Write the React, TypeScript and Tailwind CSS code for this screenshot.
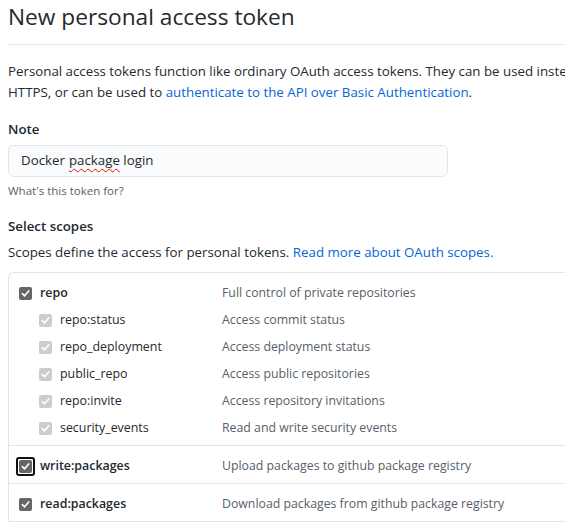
import React from 'react';

type Scope = {
  name: string;
  description: string;
  children?: { name: string; description: string }[];
  focused?: boolean;
};

const scopes: Scope[] = [
  {
    name: 'repo',
    description: 'Full control of private repositories',
    children: [
      { name: 'repo:status', description: 'Access commit status' },
      { name: 'repo_deployment', description: 'Access deployment status' },
      { name: 'public_repo', description: 'Access public repositories' },
      { name: 'repo:invite', description: 'Access repository invitations' },
      { name: 'security_events', description: 'Read and write security events' },
    ],
  },
  { name: 'write:packages', description: 'Upload packages to github package registry', focused: true },
  { name: 'read:packages', description: 'Download packages from github package registry' },
];

function CheckBox({ disabled, focused }: { disabled?: boolean; focused?: boolean }) {
  const box = (
    <span
      className={`flex h-[13px] w-[13px] items-center justify-center rounded-[2px] ${
        disabled ? 'bg-[#cdcdcd]' : 'bg-[#666666]'
      }`}
    >
      <svg width="9" height="9" viewBox="0 0 10 10" fill="none">
        <path d="M1.5 5.2 L4 7.6 L8.6 2.2" stroke="white" strokeWidth="1.8" strokeLinecap="round" strokeLinejoin="round" />
      </svg>
    </span>
  );
  if (focused) {
    return (
      <span className="-m-[3px] flex rounded-[3px] border-2 border-[#101010] p-[1px]">{box}</span>
    );
  }
  return box;
}

function ScopeRow({
  name,
  description,
  sub,
  focused,
}: {
  name: string;
  description: string;
  sub?: boolean;
  focused?: boolean;
}) {
  return (
    <div className="flex h-[27px] items-center">
      <div className={`flex w-[203px] shrink-0 items-center gap-2 ${sub ? 'pl-5' : ''}`}>
        <CheckBox disabled={sub} focused={focused} />
        <span className={`text-[12.4px] text-[#24292e] ${sub ? '' : 'font-semibold'}`}>{name}</span>
      </div>
      <span className="whitespace-nowrap text-[12.3px] text-[#586069]">{description}</span>
    </div>
  );
}

export default function App() {
  return (
    <div className="h-[524px] w-[565px] overflow-hidden bg-white font-['Open_Sans',sans-serif] text-[#24292e]">
      <div className="w-[720px] pl-2">
        <div className="border-b border-[#e1e4e8] pb-[10px]">
          <h1 className="text-[22.7px] font-normal leading-[34px]">New personal access token</h1>
        </div>

        <p className="mt-4 whitespace-nowrap text-[13.3px] leading-[21px]">
          Personal access tokens function like ordinary OAuth access tokens. They can be used instead of a password for Git over
          <br />
          HTTPS, or can be used to{' '}
          <a className="text-[#0366d6]">authenticate to the API over Basic Authentication</a>.
        </p>

        <div className="mt-[16px]">
          <label className="block text-[13.3px] font-semibold leading-[21px]">Note</label>
          <div className="mt-[5px] flex h-[32px] w-[440px] items-center rounded-md border border-[#e1e4e8] bg-[#fafbfc] px-3 text-[13.3px]">
            Docker{' '}
            <span className="ml-[4px] underline decoration-[#e51400] decoration-wavy decoration-1 underline-offset-[3px]">
              package
            </span>
            &nbsp;login
          </div>
          <p className="mt-[5px] text-[11.5px] leading-[18px] text-[#586069]">What's this token for?</p>
        </div>

        <div className="mt-[16px]">
          <h3 className="text-[13.3px] font-semibold leading-[21px]">Select scopes</h3>
          <p className="mt-[5px] text-[13.3px] leading-[21px]">
            Scopes define the access for personal tokens.{' '}
            <a className="text-[#0366d6]">Read more about OAuth scopes.</a>
          </p>
        </div>

        <div className="mt-[9px] rounded-tl-md border-l border-t border-[#e1e4e8]">
          {scopes.map((s) => (
            <div key={s.name} className="border-b border-[#e1e4e8] pb-[3px] pl-[10px] pt-[7px]">
              <ScopeRow name={s.name} description={s.description} focused={s.focused} />
              {s.children?.map((c) => (
                <ScopeRow key={c.name} name={c.name} description={c.description} sub />
              ))}
            </div>
          ))}
        </div>
      </div>
    </div>
  );
}
